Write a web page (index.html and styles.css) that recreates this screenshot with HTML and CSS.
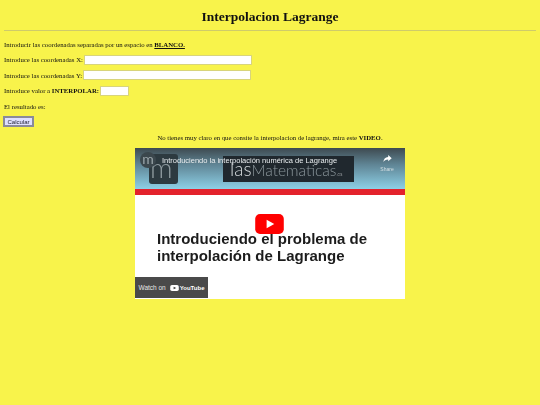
FILE: index.html
```html
<!DOCTYPE html>
<html lang="en">
<head>
    <meta charset="UTF-8">
    <title>Interpolacion Lagrange</title>
    <link rel="stylesheet" href="styles.css">
</head>
<body>
    <div class="page">
    <h1>Interpolacion Lagrange</h1>
    <hr>
    <p class="row">Introducir las coordenadas separadas por un espacio en <b class="under">BLANCO.</b></p>
    <p class="row">Introduce las coordenadas X: <input type="text" class="coord"></p>
    <p class="row">Introduce las coordenadas Y: <input type="text" class="coord"></p>
    <p class="row">Introduce valor a <b>INTERPOLAR:</b> <input type="text" class="small"></p>
    <p class="row">El resultado es:</p>
    <p class="row"><button type="button">Calcular</button></p>
    <p class="note">No tienes muy claro en que consite la interpolacion de lagrange, mira este <b>VIDEO</b>.</p>
    <div class="video">
        <div class="video-top">
            <div class="channel">
                <span class="logo-m">m</span>
            </div>
            <span class="logo-round">m</span>
            <div class="brand">las<span class="thin">Matematicas</span><span class="es">.es</span></div>
            <div class="video-title">Introduciendo la interpolación numérica de Lagrange</div>
            <div class="share">
                <svg width="9" height="7" viewBox="0 0 24 20"><path d="M14 0l10 9-10 9v-5.500C7 12.500 3 15 0 20 1 12 5 6.500 14 5.500z" fill="#fff"/></svg>
                <span>Share</span>
            </div>
        </div>
        <div class="red-bar"></div>
        <div class="slide">
            <div class="slide-text">Introduciendo el problema de<br>interpolación de Lagrange</div>
            <svg class="play" width="29" height="20" viewBox="0 0 30 21"><rect width="30" height="21" rx="5" fill="#f00"/><path d="M12 6l8 4.500-8 4.500z" fill="#fff"/></svg>
            <div class="watch">
                <span>Watch on</span>
                <svg width="9" height="6" viewBox="0 0 10 7"><rect width="10" height="7" rx="2" fill="#fff"/><path d="M4 2l3 1.500-3 1.500z" fill="#333"/></svg>
                <span class="yt">YouTube</span>
            </div>
        </div>
    </div>
    </div>
</body>
</html>
```

FILE: styles.css
```css
body {
    margin: 0;
    background: #f8f34b;
    color: #111;
    font-family: "Liberation Serif", serif;
    font-size: 6.75px;
}
.page {
    padding: 0 4px;
    filter: blur(0.25px);
}
h1 {
    margin: 0;
    padding-top: 9px;
    text-align: center;
    font-size: 13.500px;
    line-height: 16px;
}
hr {
    margin: 5px 0 0 0;
    border: none;
    border-top: 1px solid #cfcb6a;
}
.row {
    margin: 0;
    height: 15.500px;
    display: flex;
    align-items: center;
    white-space: pre;
}
hr + .row {
    margin-top: 5.250px;
}
.under {
    text-decoration: underline;
}
input {
    box-sizing: border-box;
    height: 10px;
    margin: 0;
    padding: 0;
    background: #fff;
    border: 1px solid #d8d47c;
}
.coord {
    width: 168px;
    margin-left: -1px;
}
.small {
    width: 29px;
    margin-left: 1px;
}
button {
    box-sizing: border-box;
    width: 31px;
    height: 11px;
    margin-left: -1px;
    padding: 0;
    background: #dfe0ff;
    border: 2px solid #8a8a9a;
    color: #223;
    font-family: "Liberation Sans", sans-serif;
    font-size: 6px;
    line-height: 6px;
}
.note {
    margin: 2.750px 0 0 0;
    text-align: center;
    line-height: 12px;
}
.video {
    width: 270px;
    height: 151px;
    margin: 4px auto 0;
    background: #fff;
    display: flex;
    flex-direction: column;
}
.video-top {
    position: relative;
    height: 41px;
    background: linear-gradient(#3e4a50, #5f8494 40%, #8dd0e6);
    overflow: hidden;
}
.channel {
    position: absolute;
    left: 14px;
    top: 6px;
    width: 29px;
    height: 30px;
    border-radius: 3px;
    background: #2d3a40;
}
.logo-m {
    position: absolute;
    left: 1px;
    top: 2px;
    color: #8d999e;
    font-family: "Lato", sans-serif;
    font-weight: 300;
    font-size: 28px;
    line-height: 22px;
}
.logo-round {
    position: absolute;
    left: 5px;
    top: 4px;
    width: 16px;
    height: 16px;
    border-radius: 50%;
    background: #3b474d;
    color: #9aa5aa;
    text-align: center;
    font-family: "Lato", sans-serif;
    font-size: 14px;
    line-height: 14px;
}
.brand {
    position: absolute;
    left: 88px;
    top: 8px;
    width: 131px;
    height: 26px;
    box-sizing: border-box;
    padding-left: 7px;
    background: #20282e;
    color: #d5dadc;
    font-family: "Lato", sans-serif;
    font-weight: 300;
    font-size: 19px;
    line-height: 26px;
    white-space: nowrap;
}
.thin {
    color: #8c979c;
    font-size: 15.500px;
}
.es {
    font-size: 5px;
}
.video-title {
    position: absolute;
    left: 27px;
    top: 8px;
    color: #e8ecee;
    font-family: "Liberation Sans", sans-serif;
    font-size: 7.500px;
    line-height: 10px;
    white-space: nowrap;
}
.share {
    position: absolute;
    right: 9px;
    top: 7px;
    width: 18px;
    display: flex;
    flex-direction: column;
    align-items: center;
    gap: 4px;
    color: #d5dfe3;
    font-family: "Liberation Sans", sans-serif;
    font-size: 5px;
}
.red-bar {
    height: 6px;
    background: #e3222c;
}
.slide {
    position: relative;
    flex: 1;
}
.slide-text {
    position: absolute;
    left: 22px;
    top: 35px;
    color: #1c1c1c;
    font-family: "Liberation Sans", sans-serif;
    font-weight: bold;
    font-size: 15px;
    line-height: 17px;
    white-space: nowrap;
}
.play {
    position: absolute;
    left: 120px;
    top: 19px;
}
.watch {
    position: absolute;
    left: 0;
    bottom: 1px;
    width: 73px;
    height: 21px;
    background: #4a4a4a;
    color: #e6e6e6;
    display: flex;
    align-items: center;
    justify-content: center;
    gap: 4px;
    font-family: "Liberation Sans", sans-serif;
    font-size: 6.500px;
}
.yt {
    margin-left: -3px;
    font-weight: bold;
    font-size: 6px;
    color: #fff;
}
```
